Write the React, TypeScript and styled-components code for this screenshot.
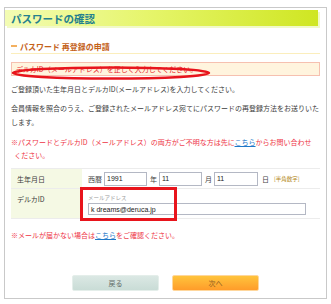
import React from "react";
import styled, { createGlobalStyle } from "styled-components";

const GlobalStyle = createGlobalStyle`
  body {
    margin: 0;
    background: #ffffff;
    font-family: "Noto Sans CJK JP", "Noto Sans", sans-serif;
    color: #444;
  }
`;

const Frame = styled.div`
  position: relative;
  box-sizing: border-box;
  width: 323px;
  height: 292px;
  margin: 7px 0 0 4px;
  border: 1px solid #c9c9c9;
  padding: 2px 6px 5px 0;
`;

const Header = styled.div`
  height: 16px;
  margin-right: 2px;
  background: linear-gradient(to right, #f3fcb4 0%, #e6f56c 45%, #cfe622 100%);
  box-shadow: 2px 2px 0 #f1f9c8;
  display: flex;
  align-items: center;
  padding-left: 6px;
  h1 {
    margin: 0;
    font-size: 10.5px;
    font-weight: bold;
    color: #24808e;
  }
`;

const Body = styled.div`
  padding: 0 0 0 6px;
`;

const SubHeading = styled.h2`
  margin: 13px 0 0;
  height: 14px;
  display: flex;
  align-items: center;
  gap: 3px;
  font-size: 8px;
  font-weight: bold;
  color: #c4621a;
  border-bottom: 1px solid #fbeebc;
  &::before {
    content: "";
    display: block;
    width: 6px;
    height: 2px;
    background: #f3b060;
  }
`;

const ErrorBox = styled.div`
  box-sizing: border-box;
  margin-top: 8px;
  height: 14px;
  padding-left: 4px;
  display: flex;
  align-items: center;
  background: #fff4de;
  border: 1px solid #f6c0b0;
  color: #e8262c;
  font-size: 7px;
`;

const Text = styled.p<{ $red?: boolean; $gap: number }>`
  margin: ${({ $gap }) => $gap}px 0 0;
  font-size: 7px;
  line-height: ${({ $red }) => ($red ? 13 : 14)}px;
  color: ${({ $red }) => ($red ? "#ee3344" : "#3c3c3c")};
`;

const Link = styled.a`
  color: #1e78c8;
  text-decoration: underline;
`;

const Table = styled.div`
  margin-top: 6px;
  border-top: 1px solid #ececec;
`;

const Row = styled.div<{ $h: number }>`
  display: flex;
  height: ${({ $h }) => $h}px;
  border-bottom: 1px solid #ececec;
`;

const Label = styled.div<{ $top?: boolean }>`
  width: 65px;
  flex-shrink: 0;
  background: #f5f9e4;
  padding-left: 6px;
  padding-top: ${({ $top }) => ($top ? "5px" : "0")};
  display: flex;
  align-items: ${({ $top }) => ($top ? "flex-start" : "center")};
  font-size: 7px;
  color: #3c3c3c;
`;

const Cell = styled.div<{ $column?: boolean }>`
  flex: 1;
  display: flex;
  flex-direction: ${({ $column }) => ($column ? "column" : "row")};
  align-items: ${({ $column }) => ($column ? "flex-start" : "center")};
  padding-left: 6px;
  font-size: 7px;
  color: #3c3c3c;
`;

const Unit = styled.span<{ $w: number; $pad?: number }>`
  box-sizing: border-box;
  width: ${({ $w }) => $w}px;
  padding-left: ${({ $pad }) => $pad ?? 0}px;
  font-size: 7px;
  color: #444;
`;

const Input = styled.div<{ $w: number; $h?: number }>`
  box-sizing: border-box;
  width: ${({ $w }) => $w}px;
  height: ${({ $h }) => $h ?? 14}px;
  border: 1px solid #b4b8c4;
  background: #fff;
  display: flex;
  align-items: center;
  padding-left: 2px;
  font-family: "Liberation Sans", "Noto Sans CJK JP", sans-serif;
  font-size: 7px;
  color: #222;
`;

const Hint = styled.span`
  margin-left: 4px;
  font-size: 5.5px;
  color: #b48a1c;
`;

const Caption = styled.span`
  margin-top: 5px;
  height: 9px;
  font-size: 5.5px;
  color: #9a9a9a;
`;

const Buttons = styled.div`
  display: flex;
  justify-content: center;
  gap: 13px;
  margin-top: 33px;
  padding-left: 6px;
`;

const Button = styled.button<{ $primary?: boolean }>`
  box-sizing: border-box;
  width: 87px;
  height: 16px;
  border-radius: 2px;
  border: 1px solid ${({ $primary }) => ($primary ? "#ffd79c" : "#e4eeea")};
  background: ${({ $primary }) =>
    $primary
      ? "linear-gradient(#ffc43c, #ff9c2a)"
      : "linear-gradient(#dbe8e4, #c9dcd6)"};
  color: ${({ $primary }) => ($primary ? "#8a5a22" : "#5f6b68")};
  font-family: "Noto Sans CJK JP", sans-serif;
  font-size: 7px;
  padding: 0;
`;

const Ellipse = styled.svg`
  position: absolute;
  left: 5px;
  top: 58px;
  overflow: visible;
`;

const Highlight = styled.div`
  position: absolute;
  left: 75px;
  top: 179px;
  width: 97px;
  height: 34px;
  box-sizing: border-box;
  border: 3px solid #e8141c;
`;

export default function App() {
  return (
    <>
      <GlobalStyle />
      <Frame>
        <Header>
          <h1>パスワードの確認</h1>
        </Header>
        <Body>
          <SubHeading>パスワード 再登録の申請</SubHeading>
          <ErrorBox>デルカID（メールアドレス）を正しく入力してください。</ErrorBox>
          <Text $gap={6}>
            ご登録頂いた生年月日とデルカID(メールアドレス)を入力してください。
          </Text>
          <Text $gap={5}>
            会員情報を照合のうえ、ご登録されたメールアドレス宛てにパスワードの再登録方法をお送りいたします。
          </Text>
          <Text $red $gap={7}>
            ※パスワードとデルカID（メールアドレス）の両方がご不明な方は先に
            <Link>こちら</Link>からお問い合わせ
            <br />
            &nbsp;&nbsp;ください。
          </Text>
          <Table>
            <Row $h={19}>
              <Label>生年月日</Label>
              <Cell>
                <Unit $w={16}>西暦</Unit>
                <Input $w={43}>1991</Input>
                <Unit $w={12} $pad={3}>年</Unit>
                <Input $w={43}>11</Input>
                <Unit $w={12} $pad={3}>月</Unit>
                <Input $w={44}>11</Input>
                <Unit $w={12} $pad={4}>日</Unit>
                <Hint>[半角数字]</Hint>
              </Cell>
            </Row>
            <Row $h={29}>
              <Label $top>デルカID</Label>
              <Cell $column>
                <Caption>メールアドレス</Caption>
                <Input $w={218} $h={12}>k dreams@deruca.jp</Input>
              </Cell>
            </Row>
          </Table>
          <Text $red $gap={10}>
            ※メールが届かない場合は<Link>こちら</Link>をご確認ください。
          </Text>
        </Body>
        <Buttons>
          <Button>戻る</Button>
          <Button $primary>次へ</Button>
        </Buttons>
        <Ellipse width="200" height="14">
          <ellipse cx="101" cy="7" rx="98" ry="5.5" fill="none" stroke="#e8141c" strokeWidth="2.5" />
        </Ellipse>
        <Highlight />
      </Frame>
    </>
  );
}
